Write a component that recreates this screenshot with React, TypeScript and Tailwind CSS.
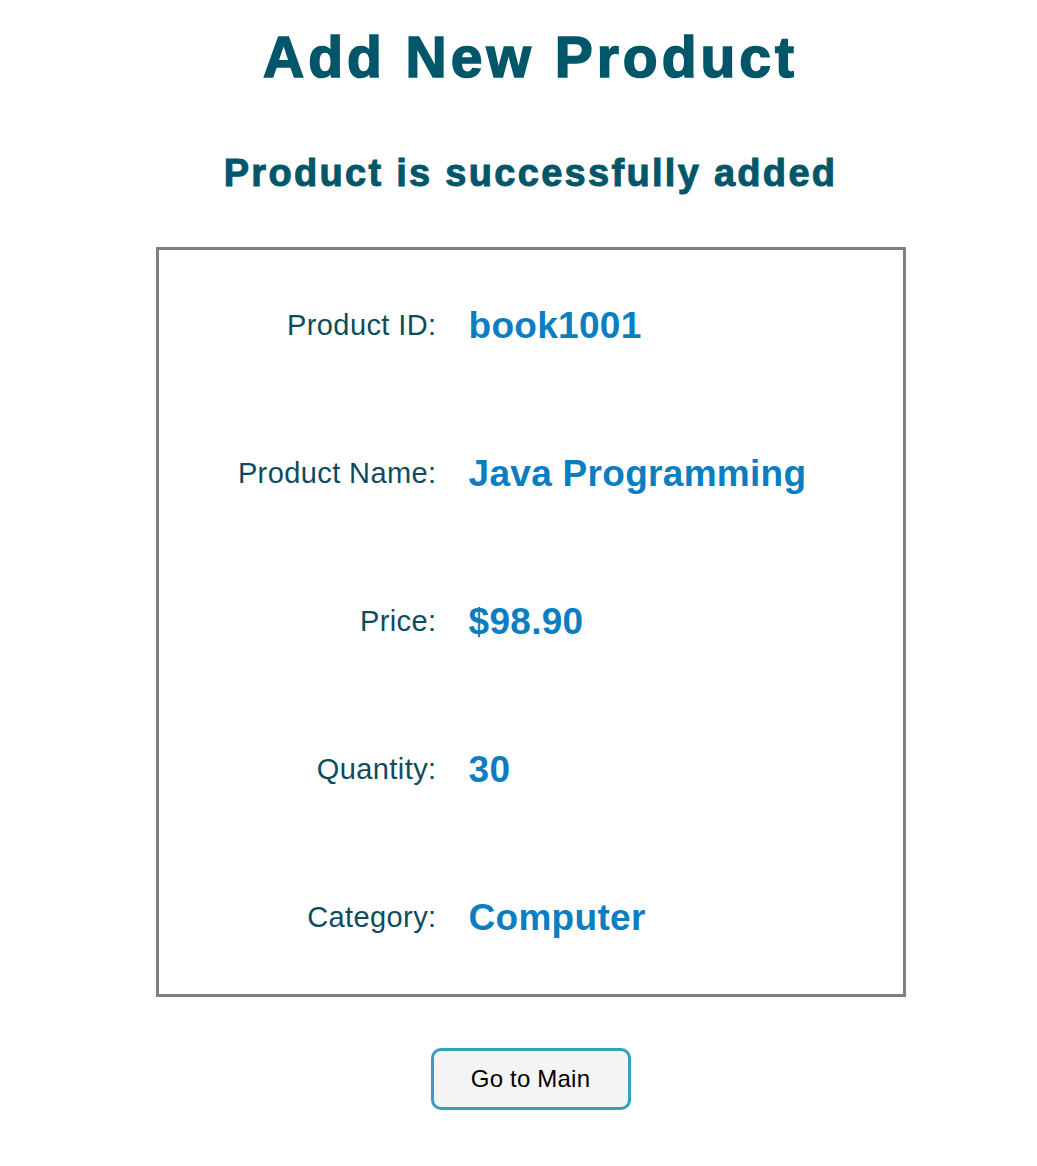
import React from 'react';

interface Row {
    label: string;
    value: string;
}

const rows: Row[] = [
    { label: 'Product ID:', value: 'book1001' },
    { label: 'Product Name:', value: 'Java Programming' },
    { label: 'Price:', value: '$98.90' },
    { label: 'Quantity:', value: '30' },
    { label: 'Category:', value: 'Computer' },
];

const App: React.FC = () => {
    return (
        <div className="min-h-screen bg-white pl-[24px] font-['Liberation_Sans',Arial,sans-serif] flex flex-col items-center">
            <h1 className="mt-[25px] text-[57px] leading-[64px] font-bold tracking-[4px] text-[#02566a] [-webkit-text-stroke:1.6px_#02566a]">
                Add New Product
            </h1>
            <h2 className="mt-[62px] text-[38px] leading-[44px] font-bold tracking-[2.3px] text-[#02566a] [-webkit-text-stroke:1px_#02566a]">
                Product is successfully added
            </h2>

            <div className="mt-[52px] w-[750px] border-[3px] border-[#808080] py-[2px]">
                {rows.map((r) => (
                    <div key={r.label} className="h-[148px] flex items-center">
                        <div className="w-[278px] text-right text-[29px] tracking-[0.4px] text-[#0d4c5c]">{r.label}</div>
                        <div className="ml-[32px] text-[37px] font-bold tracking-[0.3px] text-[#0a7ec0]">{r.value}</div>
                    </div>
                ))}
            </div>

            <button
                type="button"
                className="mt-[51px] w-[200px] h-[62px] rounded-[10px] border-[3px] border-[#35a0b6] bg-[#f4f4f4] text-[24px] tracking-[0.2px] text-black"
            >
                Go to Main
            </button>
        </div>
    );
};

export default App;
